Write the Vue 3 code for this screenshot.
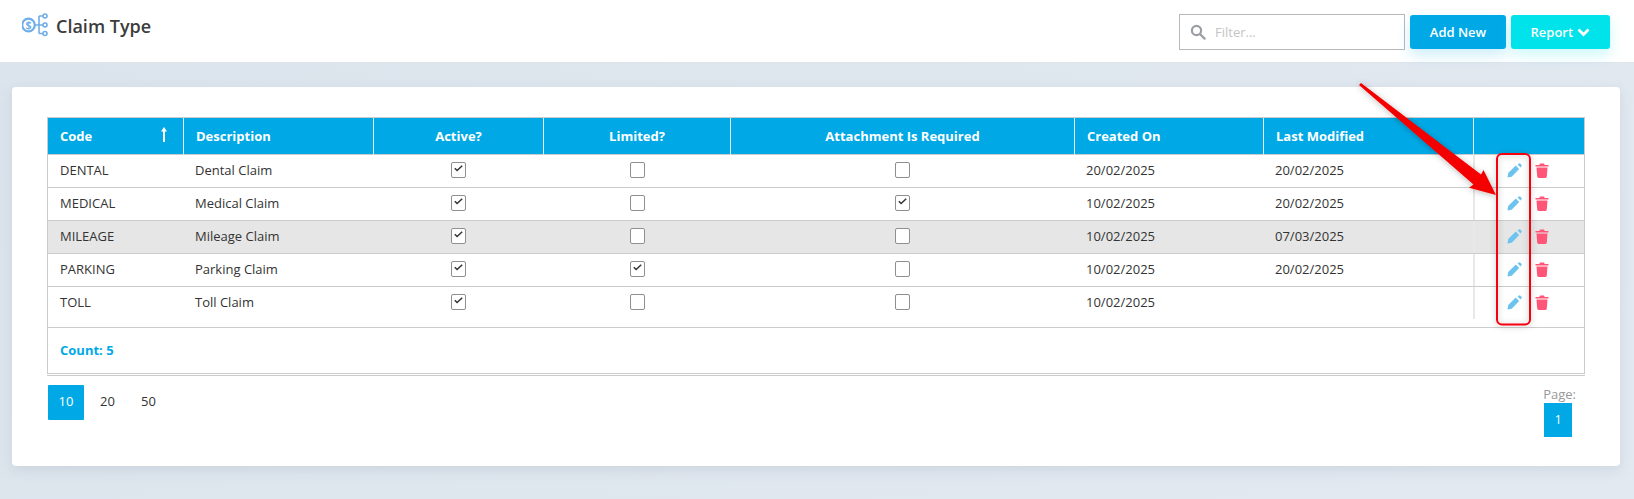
<script setup>
const rows = [
  { code: 'DENTAL', desc: 'Dental Claim', active: true, limited: false, attach: false, created: '20/02/2025', modified: '20/02/2025' },
  { code: 'MEDICAL', desc: 'Medical Claim', active: true, limited: false, attach: true, created: '10/02/2025', modified: '20/02/2025' },
  { code: 'MILEAGE', desc: 'Mileage Claim', active: true, limited: false, attach: false, created: '10/02/2025', modified: '07/03/2025', hover: true },
  { code: 'PARKING', desc: 'Parking Claim', active: true, limited: true, attach: false, created: '10/02/2025', modified: '20/02/2025' },
  { code: 'TOLL', desc: 'Toll Claim', active: true, limited: false, attach: false, created: '10/02/2025', modified: '' }
]
</script>

<template>
  <div class="page">
    <header class="topbar">
      <div class="title">
        <svg class="logo" width="27" height="26" viewBox="0 0 27 26" fill="none" stroke="#6faee8" stroke-width="1.6">
          <circle cx="6.500" cy="13" r="6.300" stroke-width="2.200" />
          <text x="6.500" y="16.800" text-anchor="middle" font-size="10.500" font-weight="700" font-family="Open Sans" fill="#6faee8" stroke="none">$</text>
          <path d="M13 13h8M17 4v17.500M17 4h4M17 21.500h4" />
          <circle cx="23" cy="4" r="2" fill="#fff" />
          <circle cx="23" cy="13" r="2" fill="#fff" />
          <circle cx="23" cy="21.500" r="2" fill="#fff" />
        </svg>
        <h1>Claim Type</h1>
      </div>
      <div class="actions">
        <label class="filter">
          <svg width="16" height="16" viewBox="0 0 16 16" fill="none" stroke="#9b9fa3" stroke-width="2.2">
            <circle cx="6.500" cy="6.500" r="4.600" />
            <path d="M10 10l4.600 4.600" stroke-linecap="round" />
          </svg>
          <span>Filter...</span>
        </label>
        <button class="btn add">Add New</button>
        <button class="btn report">Report
          <svg width="13" height="9" viewBox="0 0 13 9" fill="none" stroke="#fff" stroke-width="2.8">
            <path d="M1.500 1.500l5 5 5-5" />
          </svg>
        </button>
      </div>
    </header>

    <main class="card">
      <div class="grid-wrap">
        <table class="grid">
          <colgroup>
            <col style="width:135px" /><col style="width:190px" /><col style="width:170px" /><col style="width:187px" />
            <col style="width:344px" /><col style="width:189px" /><col style="width:210px" /><col />
          </colgroup>
          <thead>
            <tr>
              <th class="left sortable">Code
                <svg class="sort" width="8" height="15" viewBox="0 0 8 15" fill="#fff"><path d="M4 0L7 4.500H5V15H3V4.500H1z" /></svg>
              </th>
              <th class="left">Description</th>
              <th>Active?</th>
              <th>Limited?</th>
              <th>Attachment Is Required</th>
              <th class="left">Created On</th>
              <th class="left">Last Modified</th>
              <th></th>
            </tr>
          </thead>
          <tbody>
            <tr v-for="r in rows" :key="r.code" :class="{ hover: r.hover }">
              <td>{{ r.code }}</td>
              <td>{{ r.desc }}</td>
              <td class="center" v-for="(v, i) in [r.active, r.limited, r.attach]" :key="i">
                <span class="check">
                  <svg v-if="v" width="9" height="7" viewBox="0 0 9 7" fill="none" stroke="#333" stroke-width="1.5"><path d="M0.800 3.200l2.300 2.300L8.200 0.800" /></svg>
                </span>
              </td>
              <td>{{ r.created }}</td>
              <td>{{ r.modified }}</td>
              <td class="ops">
                <div class="ops-inner">
                  <svg width="15" height="15" viewBox="0 0 15 15" fill="#6cc4ee">
                    <path d="M0.500 14.500L1.200 10L8.800 2.600L12.200 6L4.700 13.700Z" />
                    <path d="M10.600 1.400L11.900 0.400Q12.500 0 13.100 0.400L14.600 1.900Q15 2.500 14.600 3.100L13.500 4.400Z" />
                  </svg>
                  <svg width="14" height="15" viewBox="0 0 14 15" fill="#ff5577">
                    <path d="M0.500 2H4.300L5 0.500H9L9.700 2H13.500V3.600H0.500Z" />
                    <path d="M1.500 4.600H12.500L11.800 13.600Q11.700 15 10.400 15H3.600Q2.300 15 2.200 13.600Z" />
                  </svg>
                </div>
              </td>
            </tr>
          </tbody>
        </table>
        <div class="count">Count: 5</div>
      </div>

      <div class="pager">
        <div class="sizes">
          <span class="size on">10</span>
          <span class="size">20</span>
          <span class="size">50</span>
        </div>
        <div class="pages">
          <span class="page-label">Page:</span>
          <span class="page-num">1</span>
        </div>
      </div>
    </main>

    <svg class="marks" width="1634" height="499" viewBox="0 0 1634 499">
      <defs>
        <filter id="sh" x="-30%" y="-30%" width="160%" height="160%">
          <feDropShadow dx="0" dy="1" stdDeviation="3" flood-color="#000" flood-opacity="0.28" />
        </filter>
      </defs>
      <g filter="url(#sh)">
        <rect x="1497" y="154" width="33" height="170.500" rx="5" fill="none" stroke="#f5000f" stroke-width="2" />
        <path d="M1361 83L1481 174.500L1483.500 170L1496 195L1469 187.700L1473.500 184.500L1359 85Z" fill="#f40000" />
      </g>
    </svg>
  </div>
</template>

<style>
html, body { margin: 0; }
</style>

<style scoped>
.page {
  position: relative;
  width: 1634px;
  height: 499px;
  overflow: hidden;
  background: linear-gradient(135deg, #dbe4ec, #e2e9f1);
  font-family: "Open Sans", "Liberation Sans", sans-serif;
  font-size: 13px;
  color: #333;
}
.topbar {
  height: 62px;
  background: #fff;
  border-bottom: 1px solid #dfe4e9;
  display: flex;
  justify-content: space-between;
  padding: 0 24px 0 22px;
  box-sizing: content-box;
}
.title {
  display: flex;
  align-items: center;
  gap: 7px;
  height: 52px;
}
.logo { flex: none; margin-top: -2px; }
h1 {
  margin: 0;
  font-size: 18px;
  font-weight: 600;
  color: #3c3c3c;
}
.actions {
  display: flex;
  align-items: flex-start;
  gap: 5px;
  padding-top: 14px;
}
.filter {
  width: 214px;
  height: 34px;
  border: 1px solid #b8b8b8;
  display: flex;
  align-items: center;
  gap: 9px;
  padding-left: 10px;
  color: #c4c4c4;
  box-sizing: content-box;
}
.btn {
  height: 34px;
  margin-top: 1px;
  border: 0;
  border-radius: 3px;
  color: #fff;
  font: 600 13px "Open Sans", sans-serif;
  padding: 0;
}
.add {
  width: 96px;
  background: #00a9e6;
  box-shadow: 0 6px 14px rgba(0, 169, 230, 0.2);
}
.report {
  width: 99px;
  background: #00e3ea;
  box-shadow: 0 6px 14px rgba(0, 227, 234, 0.2);
}
.report svg { margin-left: 1px; }
.card {
  margin: 24px 14px 0 12px;
  height: 379px;
  background: #fff;
  border-radius: 4px;
  box-shadow: 0 4px 12px rgba(150, 165, 180, 0.25);
  padding: 30px 36px 0 35px;
  box-sizing: border-box;
}
.grid-wrap {
  width: 1536px;
  border: 1px solid #ccc;
  height: 255px;
  position: relative;
  box-sizing: content-box;
}
.grid-wrap::after {
  content: "";
  position: absolute;
  left: -1px;
  right: -1px;
  bottom: -3px;
  border-bottom: 1px solid #ccc;
}
.grid {
  width: 1536px;
  border-collapse: separate;
  border-spacing: 0;
  table-layout: fixed;
}
th {
  height: 37px;
  padding: 0;
  background: #00a9e6;
  color: #fff;
  font-weight: 700;
  font-size: 13px;
  text-align: center;
  border-left: 1px solid #e6f6fc;
  border-bottom: 1px solid #ccc;
  box-sizing: border-box;
}
th:first-child { border-left: 0; }
th.left { text-align: left; padding-left: 12px; }
th.sortable { padding-left: 12px; position: relative; }
.sort { position: absolute; right: 15px; top: 9px; }
td {
  height: 33px;
  padding: 0 0 3px 12px;
  border-bottom: 1px solid #ccc;
  box-sizing: border-box;
}
tbody tr:last-child td { height: 41px; padding-bottom: 11px; }
td.center { text-align: center; padding-left: 0; padding-bottom: 5px; }
tbody tr:last-child td.center { padding-bottom: 13px; }
.hover td { background: #e6e6e6; }
.check {
  display: inline-flex;
  align-items: center;
  justify-content: center;
  width: 15px;
  height: 16px;
  margin-left: 1px;
  border: 1px solid #8f8f8f;
  border-radius: 2px;
  background: #fff;
  padding-bottom: 3px;
  box-sizing: border-box;
  vertical-align: middle;
}
.ops { padding: 0 0 1px; position: relative; }
tbody tr:last-child td.ops { padding-bottom: 9px; }
.ops::before {
  content: "";
  position: absolute;
  left: 0;
  top: 0;
  bottom: 0;
  border-left: 2px solid #e8e8e8;
}
tbody tr:last-child .ops::before { bottom: 8px; }
.ops-inner {
  display: flex;
  align-items: center;
  gap: 13px;
  padding-left: 34px;
}
.count {
  padding: 13px 12px 0;
  color: #00a9e6;
  font-weight: 700;
  font-size: 13px;
}
.pager {
  display: flex;
  justify-content: space-between;
  margin-top: 11px;
  padding-left: 1px;
}
.sizes { display: flex; }
.size {
  width: 41px;
  height: 35px;
  line-height: 33px;
  text-align: center;
}
.size.on {
  width: 36px;
  margin-right: 3px;
  background: #00a9e6;
  color: #fff;
  border-radius: 1px;
}
.pages {
  display: flex;
  flex-direction: column;
  align-items: flex-start;
  margin-right: 8px;
  margin-top: 1px;
}
.page-label { color: #999; font-size: 13px; line-height: 17px; }
.page-num {
  width: 28px;
  height: 34px;
  margin-left: 1px;
  line-height: 34px;
  text-align: center;
  background: #00a9e6;
  color: #fff;
  font-size: 12px;
}
.marks {
  position: absolute;
  left: 0;
  top: 0;
  pointer-events: none;
}
</style>
